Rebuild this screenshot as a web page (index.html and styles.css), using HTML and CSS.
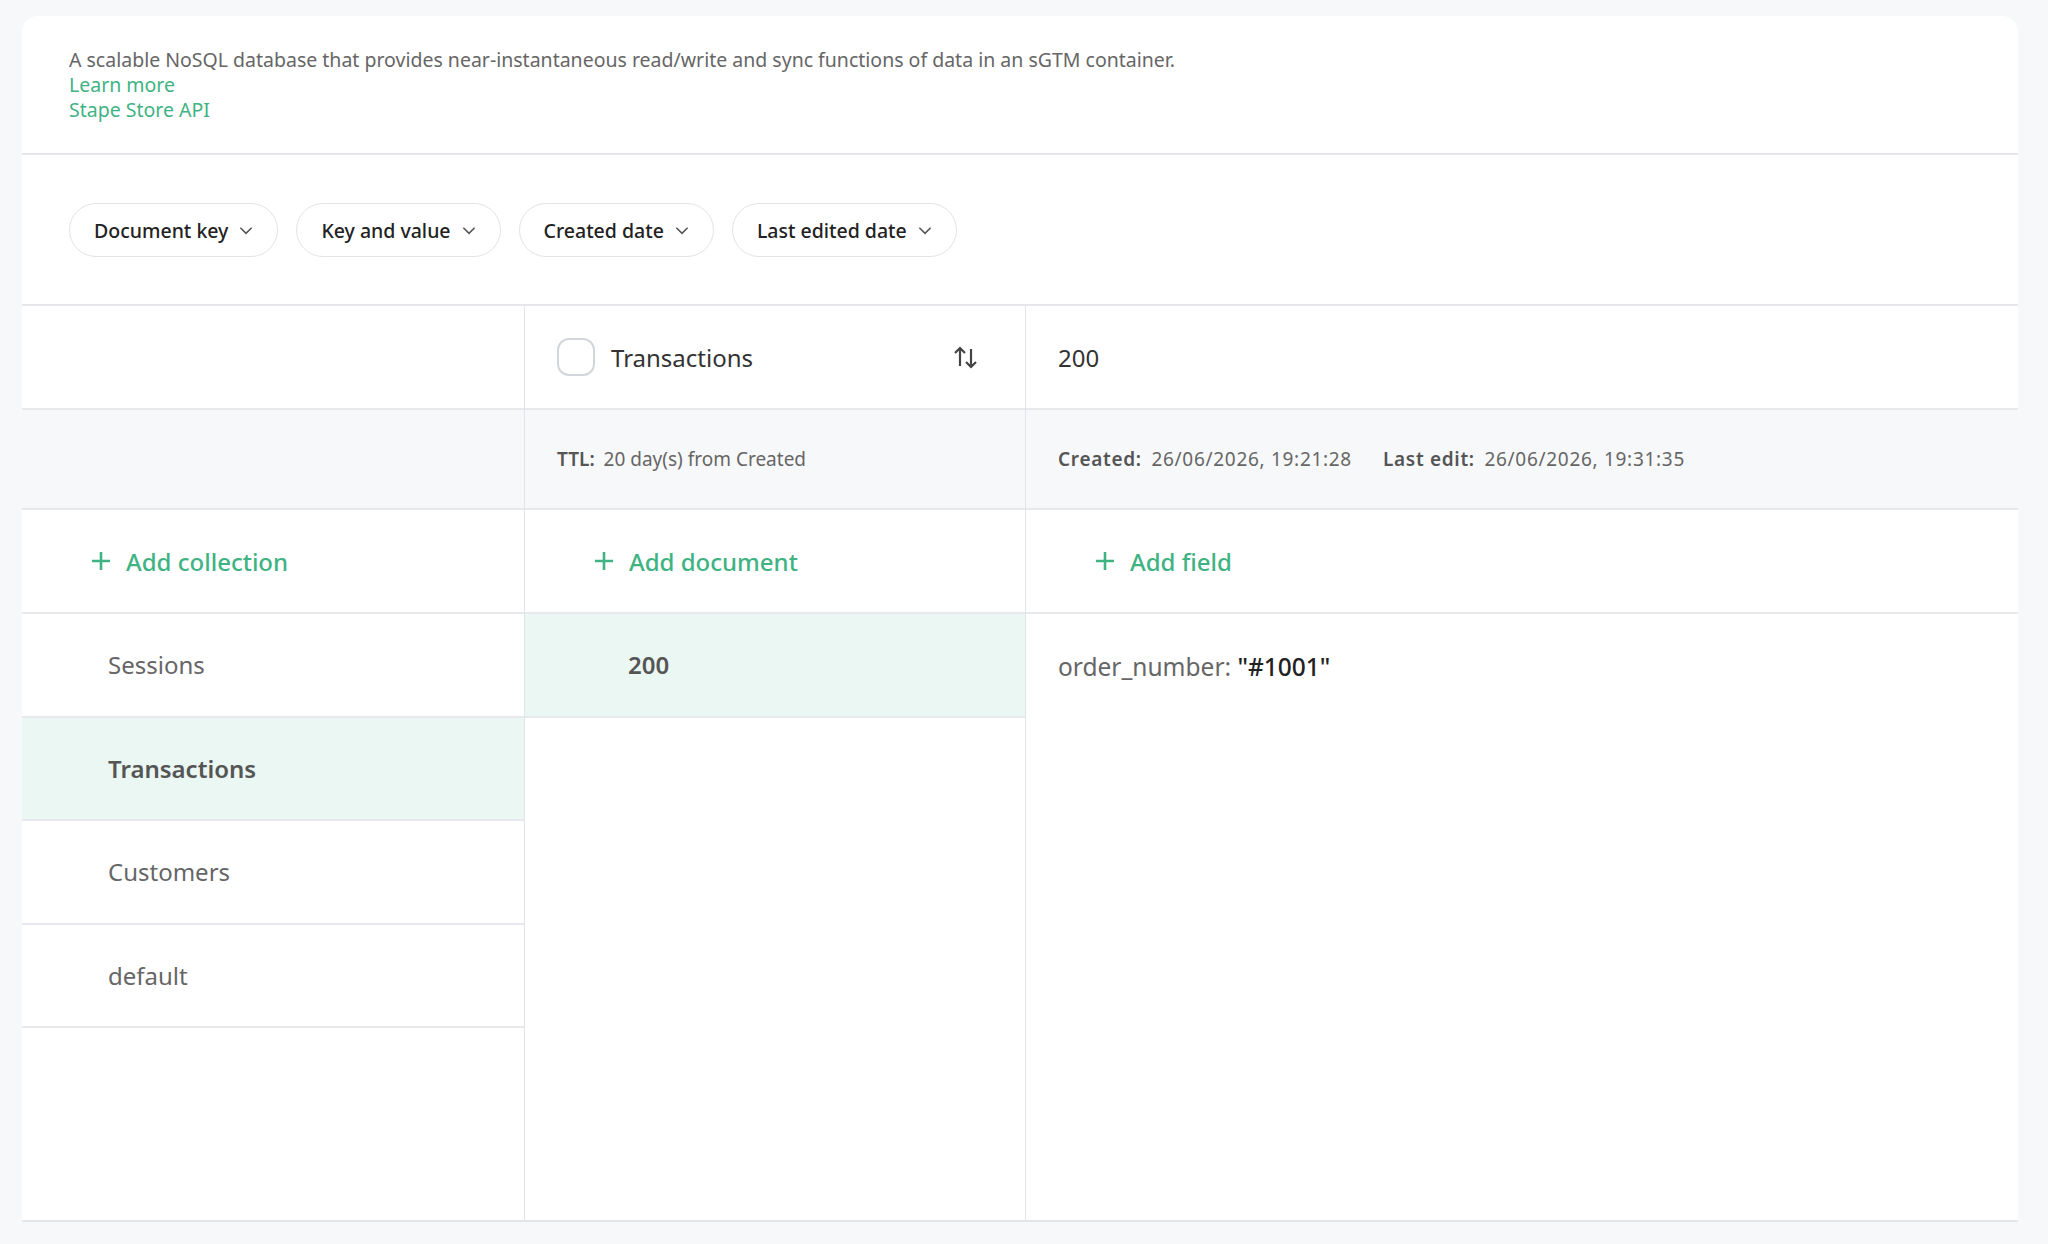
FILE: index.html
```html
<!DOCTYPE html>
<html lang="en">
<head>
    <meta charset="UTF-8">
    <title>Stape Store</title>
    <link rel="stylesheet" href="styles.css">
</head>
<body>
    <div class="card">
        <div class="intro">
            <p>A scalable NoSQL database that provides near-instantaneous read/write and sync functions of data in an sGTM container.</p>
            <a href="#">Learn more</a>
            <a href="#">Stape Store API</a>
        </div>

        <div class="filters">
            <button class="pill">Document key <svg viewBox="0 0 16 16"><path d="M3 6l5 5 5-5"/></svg></button>
            <button class="pill">Key and value <svg viewBox="0 0 16 16"><path d="M3 6l5 5 5-5"/></svg></button>
            <button class="pill">Created date <svg viewBox="0 0 16 16"><path d="M3 6l5 5 5-5"/></svg></button>
            <button class="pill">Last edited date <svg viewBox="0 0 16 16"><path d="M3 6l5 5 5-5"/></svg></button>
        </div>

        <div class="table">
            <div class="col col-collections">
                <div class="cell head"></div>
                <div class="cell meta"></div>
                <div class="cell add">
                    <svg class="plus" viewBox="0 0 20 20"><path d="M10 1v18M1 10h18"/></svg> Add collection
                </div>
                <div class="cell item">Sessions</div>
                <div class="cell item active">Transactions</div>
                <div class="cell item">Customers</div>
                <div class="cell item">default</div>
            </div>

            <div class="col col-documents">
                <div class="cell head">
                    <span class="check"></span>
                    <span class="title">Transactions</span>
                    <svg class="sort" viewBox="0 0 28 28"><path d="M8 23V5M3 10l5-5 5 5M19 6v18M14 19l5 5 5-5"/></svg>
                </div>
                <div class="cell meta"><span><b>TTL:</b> 20 day(s) from Created</span></div>
                <div class="cell add">
                    <svg class="plus" viewBox="0 0 20 20"><path d="M10 1v18M1 10h18"/></svg> Add document
                </div>
                <div class="cell doc active">200</div>
            </div>

            <div class="col col-fields">
                <div class="cell head"><span class="title">200</span></div>
                <div class="cell meta dates">
                    <span><b>Created:</b> 26/06/2026, 19:21:28</span>
                    <span><b>Last edit:</b> 26/06/2026, 19:31:35</span>
                </div>
                <div class="cell add">
                    <svg class="plus" viewBox="0 0 20 20"><path d="M10 1v18M1 10h18"/></svg> Add field
                </div>
                <div class="field">order_number: <strong>"#1001"</strong></div>
            </div>
        </div>
    </div>
</body>
</html>
```

FILE: styles.css
```css
body {
    margin: 0;
    background-color: #f7f8fa;
    font-family: "Noto Sans", "Open Sans", sans-serif;
    color: #333;
}
.card {
    margin: 16px 30px 0 22px;
    background-color: #fff;
    border-radius: 16px 16px 0 0;
    border-bottom: 2px solid #e4e5e8;
    height: 1204px;
    display: flex;
    flex-direction: column;
}
.intro {
    padding: 31px 47px 31px;
    border-bottom: 2px solid #e6e7ea;
    display: flex;
    flex-direction: column;
    font-size: 19.5px;
    line-height: 25px;
}
.intro p {
    margin: 0;
    color: #666;
}
.intro a {
    color: #40b383;
    text-decoration: none;
    align-self: flex-start;
}
.filters {
    display: flex;
    gap: 18px;
    padding: 48px 47px 47px;
    border-bottom: 2px solid #e6e7ea;
}
.pill {
    height: 54px;
    padding: 0 22px 0 24px;
    border: 1.5px solid #e2e3e6;
    border-radius: 27px;
    background: #fff;
    font-family: inherit;
    font-size: 19.5px;
    font-weight: 500;
    color: #222;
    display: flex;
    align-items: center;
    gap: 9px;
}
.pill svg {
    width: 18px;
    height: 18px;
    fill: none;
    stroke: #555;
    stroke-width: 1.4;
}
.table {
    flex: 1;
    display: grid;
    grid-template-columns: 502px 501px 1fr;
}
.col {
    display: flex;
    flex-direction: column;
}
.col + .col {
    border-left: 1px solid #e3e4e7;
}
.cell {
    display: flex;
    align-items: center;
    box-sizing: border-box;
    border-bottom: 2px solid #e8e9ec;
}
.head {
    height: 104px;
    padding: 0 32px;
    font-size: 24px;
}
.head .title {
    color: #333;
}
.check {
    width: 38px;
    height: 38px;
    box-sizing: border-box;
    border: 2px solid #d3d6db;
    border-radius: 12px;
    margin-right: 16px;
}
.sort {
    width: 28px;
    height: 28px;
    margin-left: auto;
    margin-right: 13px;
    fill: none;
    stroke: #444;
    stroke-width: 2.2;
}
.meta {
    height: 100px;
    padding: 0 32px;
    background-color: #f7f8fa;
    font-size: 19px;
    color: #666;
    gap: 31px;
}
.meta b {
    font-weight: 600;
    color: #555;
    margin-right: 4px;
}
.meta.dates {
    letter-spacing: 0.7px;
}
.add {
    height: 104px;
    padding: 0 69px;
    color: #40b383;
    font-size: 24px;
    font-weight: 500;
}
.plus {
    width: 20px;
    height: 20px;
    margin-right: 15px;
    fill: none;
    stroke: #40b383;
    stroke-width: 2.6;
}
.item {
    height: 103.5px;
    padding: 0 86px;
    font-size: 24px;
    color: #666;
}
.item.active {
    background-color: #ebf7f2;
    font-weight: 600;
    color: #555;
}
.doc {
    height: 103.5px;
    padding: 0 103px;
    font-size: 24px;
    font-weight: 600;
    color: #555;
}
.doc.active {
    background-color: #ebf7f2;
}
.field {
    padding: 36px 32px;
    font-size: 24.5px;
    color: #666;
}
.field strong {
    font-weight: 500;
    color: #222;
}
```
